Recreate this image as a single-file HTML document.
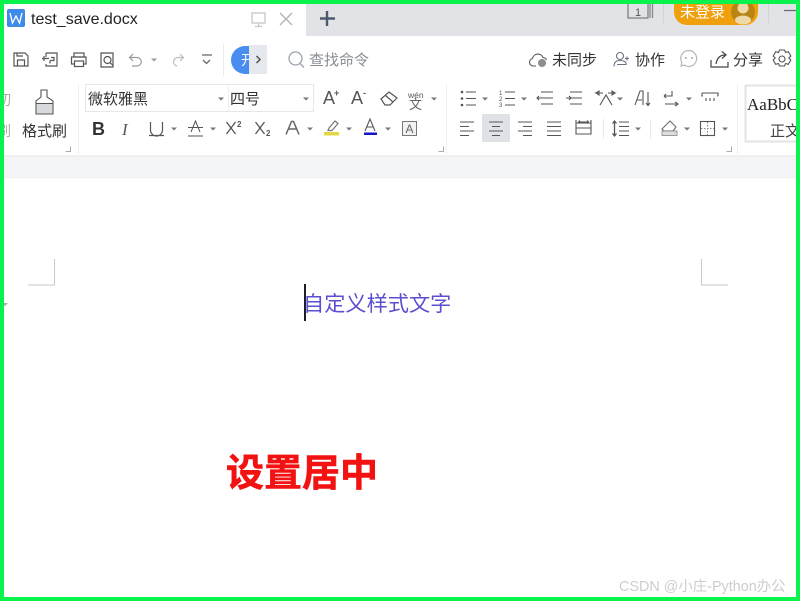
<!DOCTYPE html>
<html><head><meta charset="utf-8"><style>
html,body{margin:0;padding:0;background:#fff;width:800px;height:601px;overflow:hidden}
svg{display:block;position:absolute;left:0;top:0}
text{font-family:"Liberation Sans","Noto Sans CJK SC",sans-serif}
.i{fill:none;stroke:#555;stroke-width:1.2}
.g{fill:none;stroke:#999;stroke-width:1.2}
.a{fill:#777}
.b{filter:blur(.35px)}
</style></head><body>
<svg width="800" height="601" viewBox="0 0 800 601" xmlns="http://www.w3.org/2000/svg">
<rect width="800" height="601" fill="#fff"/>
<g class="b">
<!-- tab bar -->
<rect x="306" y="4" width="492" height="32" fill="#e2e3e6"/>
<rect x="7" y="9" width="18" height="18" rx="2" fill="#3f8ae8"/>
<path d="M10 13l2.500 10 3.500-7 3.500 7 2.500-10" fill="none" stroke="#fff" stroke-width="1.300"/>
<text x="31" y="24" font-size="16" fill="#222">test_save.docx</text>
<g fill="none" stroke="#c4c7cc" stroke-width="1.300"><rect x="252" y="13" width="13" height="10"/><path d="M258.500 23v3M255 26.500h7"/></g>
<path d="M280 13l12 12M292 13l-12 12" stroke="#b0b3b8" stroke-width="1.400" fill="none"/>
<path d="M327 11v15M320 18.500h15" stroke="#4d5a6c" stroke-width="2.400" fill="none"/>
<g fill="none" stroke="#666" stroke-width="1"><path d="M628 4v14h20v-14"/><path d="M650 4v14M652.500 4v14" stroke="#888" stroke-width="1.300"/></g>
<text x="638" y="16" font-size="11" fill="#555" text-anchor="middle">1</text>
<path d="M663.500 4v19M768.500 4v19" stroke="#d2d3d6"/>
<path d="M674 4h84v8a13 13 0 0 1-13 13h-58a13 13 0 0 1-13-13z" fill="#f0a00c"/>
<text x="680" y="17" font-size="15" fill="#fff">未登录</text>
<circle cx="743" cy="12" r="12" fill="#b98512"/>
<circle cx="743" cy="8" r="5.500" fill="#f0d9a8"/>
<ellipse cx="743" cy="20" rx="8" ry="4.500" fill="#f0d9a8"/>
<path d="M784 10.500h12" stroke="#667" stroke-width="1.200"/>

<!-- quick access -->
<g class="i">
<path d="M14 53h11l3 3v10h-14z"/><path d="M17.500 66v-6h7v6M17 53v3h6"/>
<path d="M46 53h11v13h-11v-2M46 57v-4M42 58.500h7M44 56v5"/><path d="M50 60.500h4v-3h-3M50 60.500v3"/>
<rect x="74" y="53" width="10" height="4"/><rect x="71.500" y="57" width="14.500" height="7"/><rect x="74.500" y="61" width="9" height="5.500" fill="#fff"/>
<path d="M101 53h12v14h-12z"/><circle cx="107.500" cy="60" r="3.500"/><path d="M110 62.500l3 3"/>
</g>
<g class="g">
<path d="M133 54l-3.500 3.500 3.500 3.500M130 57.500h7a4 4 0 0 1 0 8.500h-5"/>
<path d="M180 54l3.500 3.500-3.500 3.500M183 57.500h-5a4.500 4.500 0 0 0-4.500 4.500 4.500 4.500 0 0 0 3.500 4" stroke="#bbb"/>
</g>
<path d="M151 58.500h6l-3 3z" fill="#999"/>
<path d="M202 55h10M203 60l3.500 3.500 3.500-3.500" fill="none" stroke="#666" stroke-width="1.300"/>
<path d="M223.500 44v32" stroke="#ececec"/>
<path d="M231 60a14 14 0 0 1 14-14h4v28h-4a14 14 0 0 1-14-14z" fill="#4a8df0"/>
<text x="241" y="65" font-size="14" fill="#fff">开</text>
<rect x="249" y="45" width="18" height="29" fill="#e5e8ec"/>
<path d="M256.500 56l3.500 3.500-3.500 3.500" fill="none" stroke="#555" stroke-width="1.500"/>
<circle cx="295.500" cy="58.500" r="6.500" fill="none" stroke="#9ba3ad" stroke-width="1.300"/>
<path d="M300 63.500l4 4" stroke="#9ba3ad" stroke-width="1.300"/>
<text x="309" y="65" font-size="15" fill="#8a8f96">查找命令</text>

<!-- right quick -->
<path d="M536 66h-3a3.800 3.800 0 0 1-.5-7.500 5.500 5.500 0 0 1 10.500-1 4.200 4.200 0 0 1 3.500 2.500" fill="none" stroke="#555" stroke-width="1.100"/>
<circle cx="542" cy="63" r="4" fill="#8a8d92"/>
<text x="552" y="65" font-size="15" fill="#333">未同步</text>
<g fill="none" stroke="#6a7380" stroke-width="1.100"><circle cx="620" cy="56" r="3.500"/><path d="M614 66.500c0-5 3-6 6-6s6 1 6 3v1h-9M625 58.500h4M627 56.500v4"/></g>
<text x="635" y="65" font-size="15" fill="#333">协作</text>
<g fill="none" stroke="#b5b8bc" stroke-width="1.200"><path d="M689 50.500a8 8 0 1 1-5 14.500l-3 1 .8-3.500a8 8 0 0 1 7.200-12z"/></g>
<circle cx="686" cy="58" r="1" fill="#aaa"/><circle cx="692" cy="58" r="1" fill="#aaa"/>
<g fill="none" stroke="#444" stroke-width="1.200"><path d="M711 60v7h17v-5M716 64c1-6 4-9 9-9M722 51.500l4 3.500-4 3.500"/></g>
<text x="733" y="65" font-size="15" fill="#333">分享</text>
<g fill="none" stroke="#555" stroke-width="1.100"><circle cx="782" cy="59" r="3"/><path d="M779.500 50h5l1 2.500 2.800-.8 2.500 4.300-2 2 2 2-2.500 4.300-2.800-.8-1 2.500h-5l-1-2.500-2.800.8-2.500-4.300 2-2-2-2 2.500-4.300 2.800.8z"/></g>

<!-- ribbon: left -->
<text x="-3" y="105" font-size="14" fill="#aaa">切</text>
<text x="-3" y="136" font-size="14" fill="#aaa">刷</text>
<g fill="none" stroke="#555" stroke-width="1.100"><path d="M41 90h6v7l6 4v2.500h-17v-2.500l5-4zM36 103.500h17v10.500h-17z"/></g>
<rect x="36.500" y="104" width="16" height="9.500" fill="#d8dadd"/>
<text x="22" y="136" font-size="15" fill="#333">格式刷</text>
<path d="M65.500 151.500h5v-5" fill="none" stroke="#aaa"/>
<path d="M78.500 84v70" stroke="#eee"/>

<rect x="85.500" y="84.500" width="228" height="27" fill="#fff" stroke="#e6e7e8"/>
<path d="M228.500 85v26" stroke="#eee"/>
<text x="88" y="104" font-size="15" fill="#333">微软雅黑</text>
<text x="230" y="104" font-size="15" fill="#333">四号</text>
<path d="M218 97.500h6l-3 3zM303 97.500h6l-3 3z" fill="#777"/>

<text x="92" y="135" font-size="18" font-weight="bold" fill="#333">B</text>
<text x="122" y="135" font-size="17" font-style="italic" fill="#555" style="font-family:'Liberation Serif',serif">I</text>
<path d="M150.500 122v8a6 6 0 0 0 12 0v-8M149 135.500h15" fill="none" stroke="#555" stroke-width="1.200"/>
<path d="M171 127.500h6l-3 3z" class="a"/>
<path d="M191 132l4.500-11 4.500 11M188 127.500h15M188 136h15" fill="none" stroke="#555" stroke-width="1"/>
<path d="M210 127.500h6l-3 3z" class="a"/>
<path d="M226.500 122l9 12M235.500 122l-9 12" fill="none" stroke="#555" stroke-width="1.300"/>
<text x="237" y="127" font-size="8" font-weight="bold" fill="#555">2</text>
<path d="M255.500 122l9 12M264.500 122l-9 12" fill="none" stroke="#555" stroke-width="1.300"/>
<text x="266" y="136" font-size="8" font-weight="bold" fill="#555">2</text>
<path d="M286 134.500l5.500-13h2l5.500 13M288.500 129h8" fill="none" stroke="#666" stroke-width="1.500"/>
<path d="M307 127.500h6l-3 3z" class="a"/>
<path d="M329 128l6-7 3 2.500-6 7h-4z" fill="none" stroke="#777" stroke-width="1.200"/>
<rect x="324" y="132" width="15" height="3.500" fill="#e4d842"/>
<path d="M346 127.500h6l-3 3z" class="a"/>
<path d="M365 131l5-12 5 12M367 127h6" fill="none" stroke="#555" stroke-width="1.100"/>
<rect x="364" y="132.500" width="13" height="2.500" fill="#1414c8"/>
<path d="M385 127.500h6l-3 3z" class="a"/>
<rect x="402.500" y="121.500" width="14" height="14" fill="#f2f2f2" stroke="#777"/>
<text x="409.500" y="133" font-size="12" fill="#666" text-anchor="middle">A</text>

<text x="323" y="104" font-size="18" fill="#555">A</text><text x="334" y="96" font-size="9" font-weight="bold" fill="#555">+</text>
<text x="351" y="104" font-size="18" fill="#555">A</text><text x="363" y="96" font-size="9" font-weight="bold" fill="#555">-</text>
<path d="M381 99l8-7 8 6-7 7h-5z M385 95l8 7" fill="none" stroke="#555" stroke-width="1.200"/>
<text x="408" y="98" font-size="8.500" fill="#555">wén</text>
<text x="409" y="109" font-size="13" fill="#666">文</text>
<path d="M431 97.500h6l-3 3z" class="a"/>
<path d="M438.500 151.500h5v-5" fill="none" stroke="#aaa"/>
<path d="M446.500 84v70" stroke="#eee"/>

<!-- paragraph -->
<g fill="none" stroke="#555" stroke-width="1.100">
<path d="M466 92h10M466 98.500h10M466 105h10"/>
<path d="M505 92h10M505 98.500h10M505 105h10"/>
<path d="M541 92h12M541 98h12M541 104h12M537 98h5M539 96l-2 2 2 2"/>
<path d="M570 92h12M570 98h12M570 104h12M566 98h5M569 96l2 2-2 2"/>
<path d="M600 105l6-10 6 10M596 93l3-2v4l-3-2h7M615 93l-3-2v4l3-2h-7"/>
<path d="M635 105l5-14h3v14M637 100h5M648 92v13M646 103l2 2.500 2-2.500"/>
<path d="M664 96h8v-5M664 96l2-2M664 96l2 2M665 104h13M675 102l3 2-3 2"/>
<path d="M702 93h16v3M702 93v3h1M718 96h-1M706 98v3M710 98v3M714 98v3"/>
</g>
<circle cx="462" cy="92" r="1.300" fill="#555"/><circle cx="462" cy="98.500" r="1.300" fill="#555"/><circle cx="462" cy="105" r="1.300" fill="#555"/>
<text x="499" y="95" font-size="6" fill="#555">1</text><text x="499" y="101" font-size="6" fill="#555">2</text><text x="499" y="107" font-size="6" fill="#555">3</text>
<path d="M482 97.500h6l-3 3zM521 97.500h6l-3 3zM617 97.500h6l-3 3zM686 97.500h6l-3 3z" class="a"/>

<rect x="482" y="114" width="28" height="28" fill="#dfe3e7"/>
<g fill="none" stroke="#555" stroke-width="1.100">
<path d="M460 122h14M460 126.500h9M460 131h14M460 135.500h9"/>
<path d="M489 122h14M492 126.500h8M489 131h14M492 135.500h8"/>
<path d="M518 122h14M523 126.500h9M518 131h14M523 135.500h9"/>
<path d="M547 122h14M547 126.500h14M547 131h14M547 135.500h14"/>
<path d="M576 123h15v11h-15zM576 128h15M576 120v6M591 120v6M579 122h9M580 120.500l-1.500 1.500 1.500 1.500M587 120.500l1.500 1.500-1.500 1.500"/>
<path d="M619 122h10M619 126.500h10M619 131h10M619 135.500h10"/>
<path d="M614.500 121v15M612.500 123.500l2-2.500 2 2.500M612.500 133.500l2 2.500 2-2.500" stroke-width="1.300"/>
</g>
<path d="M603.500 119v20M650.500 119v20" stroke="#eaeaea"/>
<path d="M635 127.500h6l-3 3zM684 127.500h6l-3 3zM722 127.500h6l-3 3z" class="a"/>
<path d="M662 129l8-8 6 6-3 4h-9z" fill="none" stroke="#777" stroke-width="1.200"/>
<rect x="662" y="131" width="15" height="4.500" fill="#ddd" stroke="#888" stroke-width=".8"/>
<rect x="700.500" y="121.500" width="14" height="14" fill="none" stroke="#555" stroke-width="1.100"/>
<path d="M707.500 122v13M701 128.500h13" stroke="#888" stroke-dasharray="1.500 1.500"/>
<path d="M726.500 151.500h5v-5" fill="none" stroke="#aaa"/>
<path d="M737.500 84v70" stroke="#eee"/>

<rect x="745.500" y="85.500" width="60" height="56" fill="#fff" stroke="#e3e3e3" stroke-width="2"/>
<text x="747" y="110" font-size="17" fill="#222" style="font-family:'Liberation Serif',serif">AaBbC</text>
<text x="770" y="136" font-size="15" fill="#444">正文</text>

<!-- ribbon bottom -->
<rect x="0" y="155" width="800" height="2" fill="#eff0f1"/>
<rect x="0" y="157" width="800" height="20" fill="#f4f5f7"/>
<rect x="0" y="177" width="800" height="1" fill="#eeeff0"/>

<!-- doc -->
<path d="M54.500 259v26H28" fill="none" stroke="#c9cacb"/>
<path d="M701.500 259v26H728" fill="none" stroke="#c9cacb"/>
<path d="M2 303h6l-3 3z" fill="#aaa"/>
<rect x="304" y="284" width="2" height="37" fill="#1d1d2e"/>
<text x="303" y="311" font-size="21.200" fill="#5a4fcf">自定义样式文字</text>
<text x="226" y="486" font-size="38" font-weight="bold" fill="#f31212" stroke="#f31212" stroke-width=".6">设置居中</text>
<text x="619" y="591" font-size="14.400" fill="#cdcdcd">CSDN @小庄-Python办公</text>
</g>
<rect x="2" y="2" width="796" height="597" fill="none" stroke="#0af24c" stroke-width="4"/>
</svg>
</body></html>
